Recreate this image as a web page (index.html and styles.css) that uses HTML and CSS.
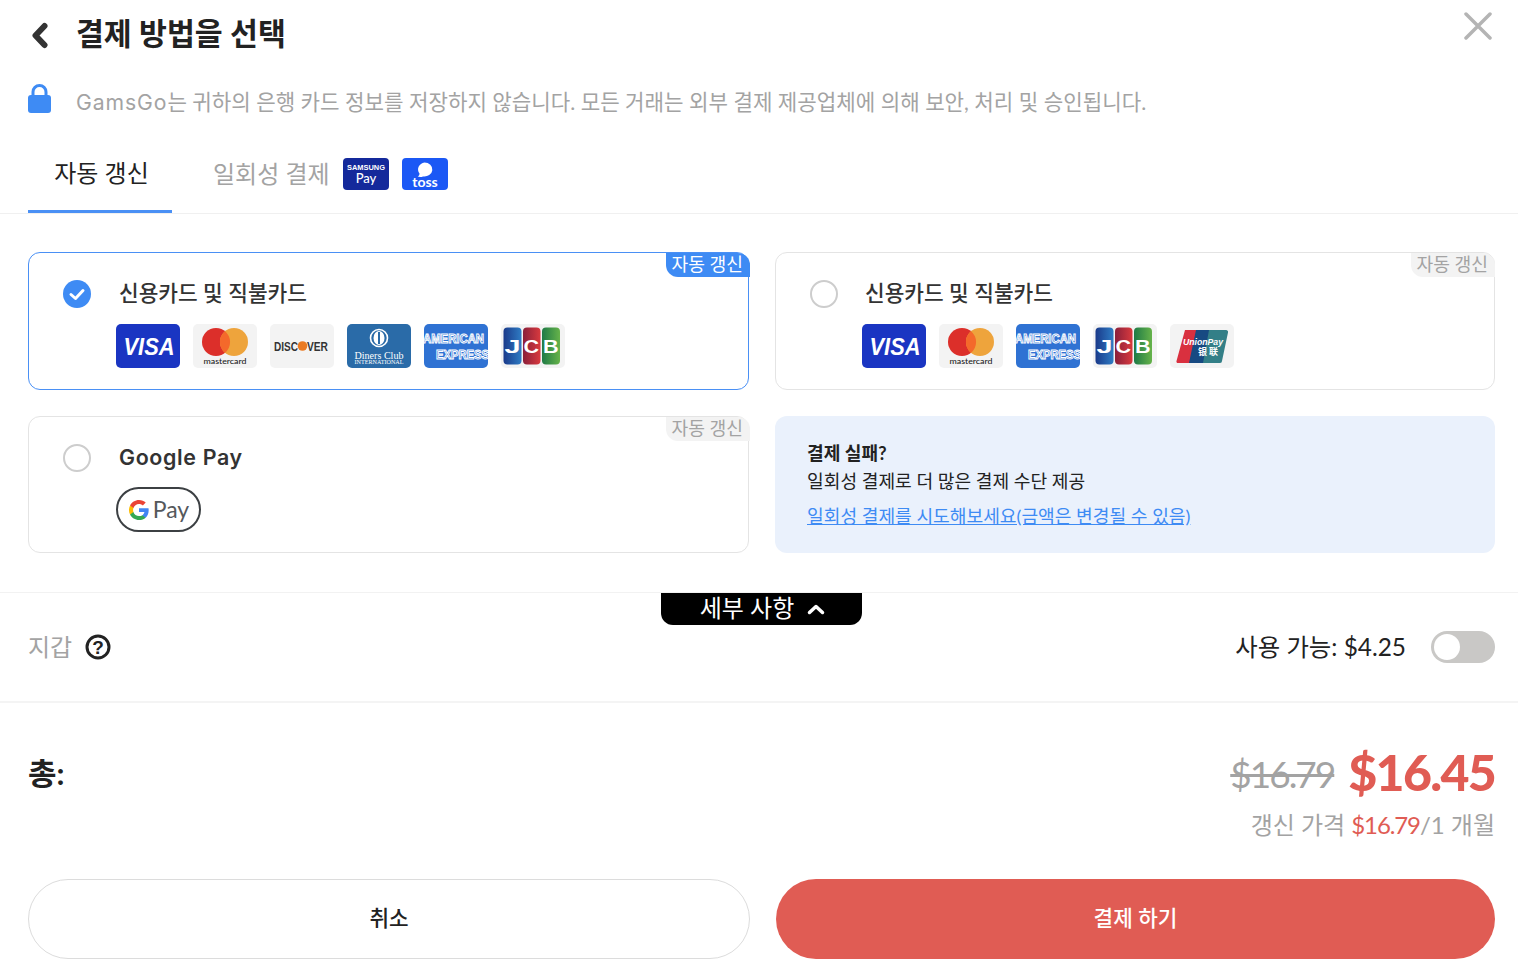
FILE: index.html
```html
<!DOCTYPE html>
<html lang="ko">
<head>
<meta charset="utf-8">
<title>결제 방법을 선택</title>
<link rel="stylesheet" href="styles.css">
</head>
<body>
<svg class="defs" width="0" height="0" aria-hidden="true">
  <defs>
    <symbol id="visa" viewBox="0 0 64 44">
      <rect width="64" height="44" rx="5" fill="#1a35c2"/>
      <text class="t-visa" x="33" y="31" text-anchor="middle" textLength="51" lengthAdjust="spacingAndGlyphs">VISA</text>
    </symbol>
    <symbol id="mc" viewBox="0 0 64 44">
      <rect width="64" height="44" rx="5" fill="#f3f3f3"/>
      <circle cx="23" cy="18" r="14" fill="#dc2f2a"/>
      <circle cx="41" cy="18" r="14" fill="#eea43c"/>
      <path d="M32 7.200a14 14 0 0 1 0 21.600a14 14 0 0 1 0-21.600z" fill="#f4692b"/>
      <text class="t-mc" x="32" y="40" text-anchor="middle" textLength="43" lengthAdjust="spacingAndGlyphs">mastercard</text>
    </symbol>
    <symbol id="disc" viewBox="0 0 64 44">
      <rect width="64" height="44" rx="5" fill="#f3f3f3"/>
      <text class="t-disc" x="4" y="26.700" textLength="24" lengthAdjust="spacingAndGlyphs">DISC</text>
      <circle cx="32.500" cy="22" r="4.800" fill="#ea7a22"/>
      <text class="t-disc" x="37" y="26.700" textLength="21" lengthAdjust="spacingAndGlyphs">VER</text>
    </symbol>
    <symbol id="diners" viewBox="0 0 64 44">
      <rect width="64" height="44" rx="5" fill="#2a6ba8"/>
      <circle cx="32" cy="14" r="8.500" fill="none" stroke="#fff" stroke-width="1.600"/>
      <ellipse cx="32" cy="14" rx="5.500" ry="7" fill="#fff"/>
      <rect x="31" y="8" width="2" height="12" fill="#2a6ba8"/>
      <text class="t-din1" x="32" y="34.500" text-anchor="middle" textLength="49" lengthAdjust="spacingAndGlyphs">Diners Club</text>
      <text class="t-din2" x="32" y="40" text-anchor="middle" textLength="49" lengthAdjust="spacingAndGlyphs">INTERNATIONAL</text>
    </symbol>
    <symbol id="amex" viewBox="0 0 64 44">
      <rect width="64" height="44" rx="5" fill="#2f72d3"/>
      <text class="t-amex" x="-1" y="19" textLength="61" lengthAdjust="spacingAndGlyphs">AMERICAN</text>
      <text class="t-amex" x="12" y="34.500" textLength="53" lengthAdjust="spacingAndGlyphs">EXPRESS</text>
    </symbol>
    <linearGradient id="g-b" x1="0" x2="1" y1="0" y2="0"><stop offset="0" stop-color="#1a3a8a"/><stop offset="1" stop-color="#2f7cc4"/></linearGradient>
    <linearGradient id="g-r" x1="0" x2="1" y1="0" y2="0"><stop offset="0" stop-color="#8a1f3a"/><stop offset="1" stop-color="#d93a3e"/></linearGradient>
    <linearGradient id="g-g" x1="0" x2="1" y1="0" y2="0"><stop offset="0" stop-color="#1f7a46"/><stop offset="1" stop-color="#66b34a"/></linearGradient>
    <symbol id="jcb" viewBox="0 0 64 44">
      <rect width="64" height="44" rx="5" fill="#f3f3f3"/>
      <rect x="2.500" y="3.500" width="18" height="37" rx="4" fill="url(#g-b)"/>
      <rect x="22" y="3.500" width="17.500" height="37" rx="4" fill="url(#g-r)"/>
      <rect x="41" y="3.500" width="18" height="37" rx="4" fill="url(#g-g)"/>
      <text class="t-jcb" transform="translate(3.500 29) scale(1.600 1)">J</text>
      <text class="t-jcb" transform="translate(22.500 29) scale(1.200 1)">C</text>
      <text class="t-jcb" transform="translate(42 29) scale(1.200 1)">B</text>
    </symbol>
    <symbol id="union" viewBox="0 0 64 44">
      <rect width="64" height="44" rx="5" fill="#f3f3f3"/>
      <path d="M15 6h13l-7 33H8a1.500 1.500 0 0 1-1.500-2z" fill="#d9303f"/>
      <path d="M26 6h16l-7 33H19z" fill="#174a82"/>
      <path d="M39 6h17a2 2 0 0 1 2 2.500L52 37a2 2 0 0 1-2 2H33z" fill="#337f87"/>
      <text class="t-up" x="33" y="21" text-anchor="middle" textLength="40" lengthAdjust="spacingAndGlyphs">UnionPay</text>
      <text class="t-yl" x="38" y="31" text-anchor="middle" textLength="20">银联</text>
    </symbol>
  </defs>
</svg>

<main class="page">
  <header class="head">
    <div class="head-left">
      <svg class="back" width="48" height="68" viewBox="0 0 48 68"><path d="M44.500 26L35.500 35.500L44.500 45" fill="none" stroke="#333" stroke-width="6" stroke-linecap="round" stroke-linejoin="round"/></svg>
      <h1 class="title">결제 방법을 선택</h1>
    </div>
    <svg class="close" width="28" height="28" viewBox="0 0 28 28"><path d="M2 2L26 26M26 2L2 26" stroke="#b4b4b4" stroke-width="3.500" stroke-linecap="round"/></svg>
  </header>

  <div class="notice">
    <svg class="lock" width="23" height="29" viewBox="0 0 23 29"><path d="M5 13V8a6.500 6.500 0 0 1 13 0v5" fill="none" stroke="#3e8bf4" stroke-width="3"/><rect x="0" y="11" width="23" height="18" rx="3" fill="#3e8bf4"/></svg>
    <p class="notice-text"><span class="brand">GamsGo</span>는 귀하의 은행 카드 정보를 저장하지 않습니다. 모든 거래는 외부 결제 제공업체에 의해 보안, 처리 및 승인됩니다.</p>
  </div>

  <nav class="tabs">
    <div class="tab tab-active">자동 갱신</div>
    <div class="tab tab-other">
      <span class="tab-label">일회성 결제</span>
      <svg class="pay-logo" width="46" height="32" viewBox="0 0 46 32">
        <rect width="46" height="32" rx="4" fill="#14299b"/>
        <text class="t-sam" x="23" y="11.500" text-anchor="middle" textLength="38" lengthAdjust="spacingAndGlyphs">SAMSUNG</text>
        <text class="t-spay" x="23" y="25" text-anchor="middle">Pay</text>
      </svg>
      <svg class="pay-logo" width="46" height="32" viewBox="0 0 46 32">
        <rect width="46" height="32" rx="4" fill="#1b58f5"/>
        <path d="M22.500 4.500a8 7 0 1 1-1.500 13.900c-1.500.7-3.500.8-5.300.2 1.300-.7 1.800-1.700 1.800-3a7.500 7 0 0 1 5-11.100z" fill="#fff"/>
        <text class="t-toss" x="23" y="29.300" text-anchor="middle">toss</text>
      </svg>
    </div>
  </nav>

  <section class="methods">
    <article class="card card-on">
      <span class="tag tag-on">자동 갱신</span>
      <svg class="radio-on" width="28" height="28" viewBox="0 0 28 28"><circle cx="14" cy="14" r="14" fill="#3e8bf4"/><path d="M8 14.500L12.500 18.500L20 10.500" fill="none" stroke="#fff" stroke-width="3" stroke-linecap="round" stroke-linejoin="round"/></svg>
      <div class="card-body">
        <h2 class="card-title">신용카드 및 직불카드</h2>
        <div class="logos">
          <svg class="logo"><use href="#visa"/></svg>
          <svg class="logo"><use href="#mc"/></svg>
          <svg class="logo"><use href="#disc"/></svg>
          <svg class="logo"><use href="#diners"/></svg>
          <svg class="logo"><use href="#amex"/></svg>
          <svg class="logo"><use href="#jcb"/></svg>
        </div>
      </div>
    </article>

    <article class="card card-alt">
      <span class="tag">자동 갱신</span>
      <span class="radio"></span>
      <div class="card-body">
        <h2 class="card-title">신용카드 및 직불카드</h2>
        <div class="logos">
          <svg class="logo"><use href="#visa"/></svg>
          <svg class="logo"><use href="#mc"/></svg>
          <svg class="logo"><use href="#amex"/></svg>
          <svg class="logo"><use href="#jcb"/></svg>
          <svg class="logo"><use href="#union"/></svg>
        </div>
      </div>
    </article>

    <article class="card">
      <span class="tag">자동 갱신</span>
      <span class="radio"></span>
      <div class="card-body">
        <h2 class="card-title card-title-latin">Google Pay</h2>
        <div class="gpay">
          <svg width="22" height="22" viewBox="0 0 48 48">
            <path fill="#4285F4" d="M45.100 24.500c0-1.600-.1-3.100-.4-4.500H24v8.500h11.800c-.5 2.800-2.100 5.100-4.400 6.700v5.500h7.100c4.200-3.800 6.600-9.500 6.600-16.200z"/>
            <path fill="#34A853" d="M24 46c5.900 0 10.900-2 14.500-5.300l-7.100-5.500c-2 1.300-4.500 2.100-7.400 2.100-5.700 0-10.500-3.800-12.200-9H4.500v5.700C8.100 41.100 15.500 46 24 46z"/>
            <path fill="#FBBC05" d="M11.800 28.300c-.4-1.300-.7-2.800-.7-4.300s.3-3 .7-4.300V14H4.500C3 17 2.100 20.400 2.100 24s.9 7 2.400 10l7.300-5.700z"/>
            <path fill="#EA4335" d="M24 10.700c3.200 0 6.100 1.100 8.400 3.300l6.300-6.300C34.900 4.200 29.900 2 24 2 15.500 2 8.100 6.900 4.500 14l7.300 5.700c1.700-5.200 6.500-9 12.200-9z"/>
          </svg>
          <span class="gpay-text">Pay</span>
        </div>
      </div>
    </article>

    <aside class="hint">
      <p class="hint-title">결제 실패?</p>
      <p class="hint-line">일회성 결제로 더 많은 결제 수단 제공</p>
      <a class="hint-link" href="#">일회성 결제를 시도해보세요(금액은 변경될 수 있음)</a>
    </aside>
  </section>

  <section class="wallet">
    <div class="details">
      <span class="lift">세부 사항</span>
      <svg width="18" height="12" viewBox="0 0 18 12"><path d="M2.500 9.500L9 3.500L15.500 9.500" fill="none" stroke="#fff" stroke-width="3.500" stroke-linecap="round" stroke-linejoin="round"/></svg>
    </div>
    <div class="wallet-left">
      <span class="lift-small">지갑</span>
      <svg class="help" width="26" height="26" viewBox="0 0 26 26"><circle cx="13" cy="13" r="11" fill="none" stroke="#222" stroke-width="3"/><text class="t-help" x="13" y="19.500" text-anchor="middle">?</text></svg>
    </div>
    <div class="wallet-right">
      <span class="lift-small">사용 가능: $4.25</span>
      <div class="toggle"><span class="knob"></span></div>
    </div>
  </section>

  <section class="total">
    <div class="total-label">총:</div>
    <div class="total-prices">
      <div class="price-line">
        <s class="price-old">$16.79</s>
        <strong class="price-new">$16.45</strong>
      </div>
      <div class="renew">갱신 가격 <em class="renew-price">$16.79</em>/1 개월</div>
    </div>
  </section>

  <footer class="actions">
    <button class="btn btn-cancel"><span class="btn-label">취소</span></button>
    <button class="btn btn-pay"><span class="btn-label">결제 하기</span></button>
  </footer>
</main>
</body>
</html>
```
FILE: styles.css
```css
* { box-sizing: border-box; }
html, body { margin: 0; padding: 0; background: #fff; }
body {
  width: 1518px;
  height: 980px;
  overflow: hidden;
  font-family: "Lato", "Noto Sans CJK KR", sans-serif;
  color: #222;
}
p, h1, h2 { margin: 0; }
.defs { position: absolute; }
.lift { display: block; margin-bottom: 6px; }
.lift-small { display: block; margin-bottom: 4px; }

.head {
  height: 68px;
  display: flex;
  justify-content: space-between;
  padding-right: 26px;
}
.head-left { display: flex; align-items: center; }
.back { display: block; }
.title {
  margin-left: 28px;
  margin-bottom: 2px;
  font-size: 30.3px;
  font-weight: 700;
  line-height: 66px;
  color: #222;
}
.close { margin-top: 12px; }

.notice {
  height: 68px;
  display: flex;
  align-items: center;
  padding-left: 28px;
}
.lock { margin-top: -8px; }
.notice-text {
  margin-left: 25px;
  margin-bottom: 4px;
  font-size: 21.2px;
  color: #a3a3a3;
  white-space: nowrap;
}
.brand { font-family: "Inter", sans-serif; letter-spacing: .9px; }

.tabs {
  height: 78px;
  display: flex;
  padding-left: 28px;
  border-bottom: 1px solid #f0f0f0;
}
.tab {
  height: 77px;
  font-size: 24px;
  display: flex;
  align-items: center;
}
.tab-active {
  width: 144px;
  justify-content: center;
  color: #222;
  border-bottom: 3px solid #4a90f5;
  padding: 0 0 4px 3px;
}
.tab-other {
  margin-left: 41px;
  color: #a3a3a3;
  gap: 13px;
  padding-bottom: 2px;
}
.tab-label { display: block; margin-bottom: 2px; }

.methods {
  display: grid;
  grid-template-columns: 721px 720px;
  grid-template-rows: 138px 137px;
  gap: 26px;
  padding: 38px 0 39px 28px;
  border-bottom: 1px solid #f2f2f2;
}
.card {
  position: relative;
  display: flex;
  align-items: flex-start;
  border: 1px solid #e4e4e4;
  border-radius: 12px;
  padding: 27px 0 0 34px;
}
.card-on { border-color: #4a90f5; }
.radio, .radio-on { flex: none; width: 28px; height: 28px; display: block; }
.radio { border: 2px solid #cdcdcd; border-radius: 50%; }
.card-body { margin-left: 25px; }
.card-alt .card-body { margin-left: 24px; }
.card-title {
  margin-top: -1px;
  padding-left: 3px;
  font-size: 21.4px;
  font-weight: 500;
  line-height: 28px;
  color: #333;
}
.card-title-latin { font-family: "Inter", sans-serif; font-weight: 600; letter-spacing: .65px; }
.logos { display: flex; gap: 13px; margin-top: 17px; }
.logo { display: block; width: 64px; height: 44px; }
.tag {
  position: absolute;
  top: 0;
  right: -2px;
  height: 24px;
  padding: 0 7px 0 5px;
  font-size: 18.2px;
  line-height: 22px;
  background: #f3f3f3;
  color: #a3a3a3;
  border-radius: 0 12px 0 12px;
}
.card-alt .tag { right: -1px; }
.tag-on { background: #3e8bf4; color: #fff; }

.gpay {
  width: 85px;
  height: 45px;
  margin-top: 16px;
  border: 2px solid #3c4043;
  border-radius: 23px;
  display: flex;
  align-items: center;
  justify-content: center;
  gap: 3px;
}
.gpay-text { font-size: 23px; color: #55585c; line-height: 1; }

.hint {
  background: #eaf1fc;
  border-radius: 12px;
  padding: 23px 0 0 32px;
  font-size: 18.15px;
  color: #222;
}
.hint-title { font-weight: 700; line-height: 28px; }
.hint-line { line-height: 28px; }
.hint-link {
  display: block;
  margin-top: 7px;
  line-height: 28px;
  color: #3e8bf4;
  text-decoration: underline;
}

.wallet {
  position: relative;
  height: 110px;
  padding: 0 23px 0 28px;
  display: flex;
  justify-content: space-between;
  align-items: center;
  border-bottom: 2px solid #f4f4f4;
}
.details {
  position: absolute;
  left: 661px;
  top: 0;
  width: 201px;
  height: 32px;
  background: #000;
  color: #fff;
  border-radius: 0 0 12px 12px;
  font-size: 24px;
  display: flex;
  align-items: center;
  justify-content: center;
  gap: 13px;
  padding-left: 2px;
}
.wallet-left { display: flex; align-items: center; gap: 13px; font-size: 24px; color: #a3a3a3; }
.wallet-right { display: flex; align-items: center; gap: 25px; font-size: 24.4px; color: #222; }
.help { display: block; }
.toggle {
  width: 64px;
  height: 32px;
  border-radius: 16px;
  background: #c9c8c6;
  padding: 3px;
}
.knob { display: block; width: 26px; height: 26px; background: #fff; border-radius: 50%; }

.total {
  display: flex;
  justify-content: space-between;
  padding: 40px 23px 0 28px;
}
.total-label { font-size: 31px; font-weight: 700; line-height: 60px; color: #222; }
.total-prices { text-align: right; }
.price-line { display: flex; justify-content: flex-end; align-items: center; gap: 14px; height: 60px; }
.price-old {
  font-size: 37px;
  letter-spacing: -2px;
  color: #a3a3a3;
  text-decoration-thickness: 3px;
}
.price-new { font-size: 50px; font-weight: 900; letter-spacing: -1.7px; margin-bottom: 3px; color: #e05c54; }
.renew { margin-top: 5px; font-size: 24px; line-height: 34px; color: #a3a3a3; }
.renew-price { font-style: normal; letter-spacing: -1.1px; color: #e05c54; }

.actions {
  display: grid;
  grid-template-columns: 722px 719px;
  gap: 26px;
  padding: 37px 0 0 28px;
}
.btn {
  height: 80px;
  border-radius: 40px;
  font-family: inherit;
  font-size: 21.3px;
  font-weight: 500;
}
.btn-label { display: block; margin-bottom: 6px; }
.btn-cancel { background: #fff; border: 1px solid #dcdcdc; color: #222; }
.btn-pay { background: #e05c54; border: 0; color: #fff; }

.t-visa { font: italic 700 24px "Liberation Sans", sans-serif; fill: #fff; }
.t-mc { font: 500 8px "Lato", sans-serif; fill: #222; }
.t-disc { font: 700 13px "Liberation Sans", sans-serif; fill: #333; }
.t-din1 { font: 400 10.5px "Liberation Serif", serif; fill: #fff; }
.t-din2 { font: 400 5.5px "Liberation Serif", serif; fill: #fff; }
.t-amex { font: 700 13px "Liberation Sans", sans-serif; fill: #2f72d3; stroke: #fff; stroke-width: 1px; }
.t-jcb { font: 700 18px "Liberation Sans", sans-serif; fill: #fff; }
.t-up { font: italic 700 9px "Liberation Sans", sans-serif; fill: #fff; }
.t-yl { font: 700 9px "Noto Sans CJK SC", sans-serif; fill: #fff; }
.t-sam { font: 700 6.5px "Liberation Sans", sans-serif; fill: #fff; }
.t-spay { font: 500 13px "Lato", sans-serif; fill: #fff; }
.t-toss { font: 700 14px "Lato", sans-serif; fill: #fff; }
.t-help { font: 700 19px "Liberation Sans", sans-serif; fill: #222; }
```
